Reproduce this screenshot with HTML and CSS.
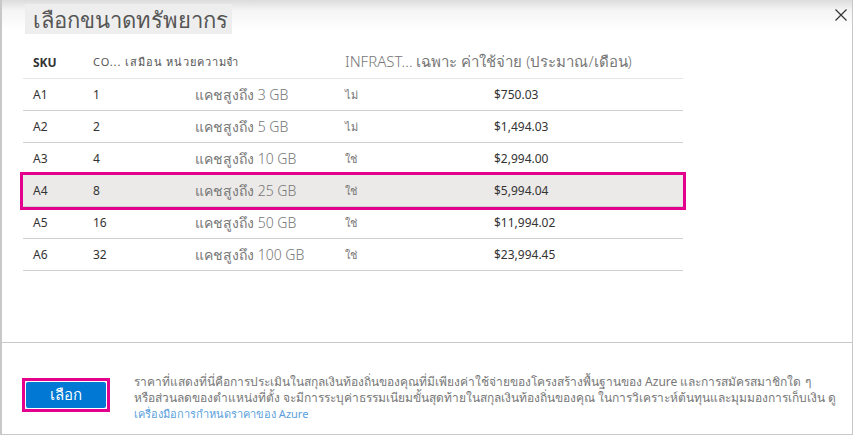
FILE: index.html
```html
<!DOCTYPE html>
<html lang="th">
<head>
<meta charset="utf-8">
<link rel="stylesheet" href="styles.css">
</head>
<body>
<div class="panel">
  <div class="top">
    <h1 class="title"><span class="tbox">เลือกขนาดทรัพยากร</span></h1>
    <button class="close" aria-label="ปิด">
      <svg width="12" height="12" viewBox="0 0 12 12"><path d="M0.5 0.5 L11.5 11.5 M11.5 0.5 L0.5 11.5" stroke="#333" stroke-width="1.2" fill="none"/></svg>
    </button>
  </div>
  <div class="grid">
    <div class="row head">
      <span class="sku">SKU</span>
      <span class="hsmall">CO... เสมือน หน่วยความจำ</span>
      <span></span>
      <span class="hbig">INFRAST... เฉพาะ ค่าใช้จ่าย (ประมาณ/เดือน)</span>
      <span></span>
    </div>
    <div class="row"><span>A1</span><span>1</span><span class="mem">แคชสูงถึง 3 GB</span><span class="yn">ไม่</span><span>$750.03</span></div>
    <div class="row"><span>A2</span><span>2</span><span class="mem">แคชสูงถึง 5 GB</span><span class="yn">ไม่</span><span>$1,494.03</span></div>
    <div class="row"><span>A3</span><span>4</span><span class="mem">แคชสูงถึง 10 GB</span><span class="yn">ใช่</span><span>$2,994.00</span></div>
    <div class="row sel"><span>A4</span><span>8</span><span class="mem">แคชสูงถึง 25 GB</span><span class="yn">ใช่</span><span>$5,994.04</span></div>
    <div class="row"><span>A5</span><span>16</span><span class="mem">แคชสูงถึง 50 GB</span><span class="yn">ใช่</span><span>$11,994.02</span></div>
    <div class="row"><span>A6</span><span>32</span><span class="mem">แคชสูงถึง 100 GB</span><span class="yn">ใช่</span><span>$23,994.45</span></div>
  </div>
  <div class="footer">
    <div class="btnwrap"><button class="btn">เลือก</button></div>
    <p class="note">ราคาที่แสดงที่นี่คือการประเมินในสกุลเงินท้องถิ่นของคุณที่มีเพียงค่าใช้จ่ายของโครงสร้างพื้นฐานของ Azure และการสมัครสมาชิกใด ๆ<br>หรือส่วนลดของตำแหน่งที่ตั้ง จะมีการระบุค่าธรรมเนียมขั้นสุดท้ายในสกุลเงินท้องถิ่นของคุณ ในการวิเคราะห์ต้นทุนและมุมมองการเก็บเงิน ดู<br><a class="link" href="#">เครื่องมือการกำหนดราคาของ Azure</a></p>
  </div>
</div>
</body>
</html>
```
FILE: styles.css
```css
* { box-sizing: border-box; }
html, body { margin: 0; padding: 0; background: #fff; }
body { font-family: "Noto Sans", "DejaVu Sans", sans-serif; color: #333; }
.panel {
  width: 853px; height: 435px;
  border-left: 2px solid #c8c8c8;
  border-right: 1px solid #c8c8c8;
  border-bottom: 1px solid #c8c8c8;
  background: linear-gradient(#dcdcdc 0px, #f4f4f4 10px, #ffffff 30px);
  display: flex; flex-direction: column;
}
.top { display: flex; justify-content: space-between; align-items: flex-start; height: 46px; }
.title { margin: 6px 0 0 23px; font-size: 22px; font-weight: 300; color: #555; line-height: 26px; }
.tbox { background: #eeeeee; padding: 0 4px 0 8px; }
.close { margin: 9px 5px 0 0; background: none; border: 0; padding: 0; width: 12px; height: 12px; display: flex; }
.grid { margin-left: 21px; width: 660px; display: flex; flex-direction: column; }
.row {
  display: grid; grid-template-columns: 60px 102px 150px 149px 1fr;
  height: 32px; align-items: center; padding-left: 10px;
  border-bottom: 1px solid #cfcfcf; font-size: 12px; color: #333;
}
.row.head { border-bottom-color: #e6e6e6; height: 33px; }
.sku { font-weight: 700; font-size: 12px; color: #333; }
.hsmall { font-size: 11px; letter-spacing: 0.9px; color: #555; white-space: nowrap; }
.hbig { font-size: 15px; color: #777; white-space: nowrap; font-weight: 300; }
.mem { font-size: 14px; color: #777; font-weight: 300; }
.yn { font-size: 11px; color: #777; }
.row.sel { background: #ebeae8; outline: 3px solid #e3008c; outline-offset: 0px; position: relative; }
.footer {
  margin-top: auto; height: 92px; border-top: 1px solid #c8c8c8;
  display: flex; align-items: flex-start; padding: 35px 0 0 20px;
}
.btnwrap { border: 3px solid #e3008c; padding: 1px; width: 88px; height: 34px; display: flex; }
.btn {
  flex: 1; background: #0078d4; color: #fff; border: 0; border-radius: 2px;
  font-family: "Noto Sans", "DejaVu Sans", sans-serif; font-size: 15px; font-weight: 300;
}
.note { margin: -4px 0 0 24px; font-size: 12px; line-height: 16px; color: #777; white-space: nowrap; }
.link { color: #5aa0dc; text-decoration: none; font-size: 11px; }
```
